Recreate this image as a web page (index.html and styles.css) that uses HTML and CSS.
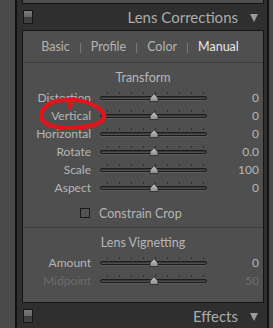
FILE: index.html
```html
<!DOCTYPE html>
<html lang="en">
<head>
  <meta charset="UTF-8">
  <meta name="viewport" content="width=device-width, initial-scale=1.0">
  <title>Lens Corrections</title>
  <link rel="stylesheet" href="styles.css">
</head>
<body>
  <svg width="0" height="0" class="defs">
    <defs>
      <linearGradient id="thumbFill" x1="0" y1="0" x2="0" y2="1">
        <stop offset="0" stop-color="#c8c8c8"/>
        <stop offset="1" stop-color="#8a8a8a"/>
      </linearGradient>
      <symbol id="thumb" viewBox="0 0 10 9">
        <path d="M5 0.5 C6 2.5 9 4 9 6 L9 8.5 L1 8.5 L1 6 C1 4 4 2.5 5 0.5 Z" fill="url(#thumbFill)" stroke="#2a2a2a" stroke-width="0.8"/>
      </symbol>
    </defs>
  </svg>

  <div class="column">
    <div class="panel panel-prev"></div>

    <div class="panel-header">
      <span class="toggle"></span>
      <span class="panel-title">Lens Corrections</span>
      <span class="caret"></span>
    </div>

    <div class="panel">
      <div class="tabs">
        <span class="tab">Basic</span>
        <span class="tab-sep"></span>
        <span class="tab">Profile</span>
        <span class="tab-sep"></span>
        <span class="tab">Color</span>
        <span class="tab-sep"></span>
        <span class="tab active">Manual</span>
      </div>

      <div class="section section-transform">
        <div class="section-title">Transform</div>
        <div class="row">
          <span class="label">Distortion</span>
          <div class="slider"><div class="ticks"></div><div class="track"></div><svg class="thumb"><use href="#thumb"/></svg></div>
          <span class="value">0</span>
        </div>
        <div class="row">
          <span class="label">Vertical</span>
          <div class="slider"><div class="ticks"></div><div class="track"></div><svg class="thumb"><use href="#thumb"/></svg></div>
          <span class="value">0</span>
        </div>
        <div class="row">
          <span class="label">Horizontal</span>
          <div class="slider"><div class="ticks"></div><div class="track"></div><svg class="thumb"><use href="#thumb"/></svg></div>
          <span class="value">0</span>
        </div>
        <div class="row">
          <span class="label">Rotate</span>
          <div class="slider"><div class="ticks"></div><div class="track"></div><svg class="thumb"><use href="#thumb"/></svg></div>
          <span class="value">0.0</span>
        </div>
        <div class="row">
          <span class="label">Scale</span>
          <div class="slider"><div class="ticks"></div><div class="track"></div><svg class="thumb"><use href="#thumb"/></svg></div>
          <span class="value">100</span>
        </div>
        <div class="row">
          <span class="label">Aspect</span>
          <div class="slider"><div class="ticks"></div><div class="track"></div><svg class="thumb"><use href="#thumb"/></svg></div>
          <span class="value">0</span>
        </div>
        <div class="check-row">
          <span class="checkbox"></span>
          <span>Constrain Crop</span>
        </div>
      </div>

      <div class="section section-vignette">
        <div class="section-title">Lens Vignetting</div>
        <div class="row">
          <span class="label">Amount</span>
          <div class="slider"><div class="ticks"></div><div class="track"></div><svg class="thumb"><use href="#thumb"/></svg></div>
          <span class="value">0</span>
        </div>
        <div class="row dim">
          <span class="label">Midpoint</span>
          <div class="slider"><div class="ticks"></div><div class="track"></div><svg class="thumb"><use href="#thumb"/></svg></div>
          <span class="value">50</span>
        </div>
      </div>
    </div>

    <div class="panel-header">
      <span class="toggle"></span>
      <span class="panel-title">Effects</span>
      <span class="caret"></span>
    </div>
  </div>

  <!-- red circle drawn over the Vertical label -->
  <svg class="annotation" viewBox="36 95 72 36">
    <path d="M64 100 C78 98 100 104 104 115 C106 124 86 128 68 128 C52 128 40 123 41 115 C42 106 54 100 64 100 C69 100 72 103 70 107" fill="none" stroke="#e3131b" stroke-width="4.2" stroke-linecap="round"/>
  </svg>
</body>
</html>
```

FILE: styles.css
```css
body {
  margin: 0;
  height: 328px;
  overflow: hidden;
  position: relative;
  background: #4a4a4a;
  font-family: Lato, "Open Sans", sans-serif;
  color: #b6b6b6;
}

.defs {
  position: absolute;
}

.column {
  box-sizing: border-box;
  margin-left: 15px;
  width: 254px;
  height: 328px;
  padding: 0 3px 0 5px;
  background: #2f2f2f;
  border-left: 2px solid #111;
  border-right: 2px solid #111;
}

.panel {
  background: #4f4f4f;
  border: 1px solid #141414;
}

.panel-prev {
  height: 3px;
  border-top: 0;
}

.panel-header {
  height: 26px;
  display: flex;
  align-items: center;
}

.toggle {
  box-sizing: border-box;
  width: 10px;
  height: 14px;
  margin-left: 1px;
  border: 1px solid #161616;
  background: linear-gradient(#7a7a7a 0, #666 50%, #3c3c3c 50%, #424242 100%);
}

.panel-title {
  margin-left: auto;
  font-size: 15px;
  color: #ababab;
}

.caret {
  width: 0;
  height: 0;
  margin: 1px 6px 0 12px;
  border-left: 4px solid transparent;
  border-right: 4px solid transparent;
  border-top: 8px solid #9c9c9c;
}

.tabs {
  height: 31px;
  display: flex;
  align-items: center;
  justify-content: center;
  gap: 10px;
  padding-right: 6px;
  border-bottom: 1px solid #3a3a3a;
  font-size: 12.5px;
}

.tab {
  color: #b4b4b4;
}

.tab.active {
  color: #e8e8e8;
}

.tab-sep {
  width: 1px;
  height: 10px;
  margin-top: 2px;
  background: #7a7a7a;
}

.section-transform {
  border-bottom: 1px solid #3a3a3a;
}

.section-vignette {
  padding-bottom: 13px;
}

.section-title {
  height: 25px;
  box-sizing: border-box;
  padding-top: 8px;
  line-height: 14px;
  text-align: center;
  font-size: 12.5px;
  color: #b6b6b6;
}

.row {
  height: 18px;
  display: grid;
  grid-template-columns: 68px 107px 43px;
  column-gap: 9px;
  align-items: center;
  font-size: 12px;
}

.label {
  text-align: right;
}

.value {
  text-align: right;
}

.row.dim .label,
.row.dim .value {
  color: #6c6c6c;
}

.slider {
  position: relative;
  height: 18px;
  display: flex;
  flex-direction: column;
  padding-top: 4px;
  box-sizing: border-box;
}

.ticks {
  height: 2px;
  width: 97px;
  margin: 0 0 2px 7px;
  background: repeating-linear-gradient(to right, #2c2c2c 0 1px, transparent 1px 12px);
}

.track {
  box-sizing: border-box;
  height: 4px;
  border: 1px solid #1c1c1c;
  border-radius: 3px;
  background: linear-gradient(#2e2e2e, #5a5a5a);
  box-shadow: 0 1px 0 rgba(255, 255, 255, 0.08);
}

.thumb {
  position: absolute;
  left: 49px;
  top: 5px;
  width: 10px;
  height: 9px;
}

.check-row {
  height: 18px;
  margin: 8px 0 5px;
  padding-left: 57px;
  display: flex;
  align-items: center;
  gap: 9px;
  font-size: 12.5px;
}

.checkbox {
  box-sizing: border-box;
  width: 10px;
  height: 10px;
  border: 1px solid #1a1a1a;
  background: #535353;
}

.annotation {
  position: absolute;
  left: 36px;
  top: 95px;
  width: 72px;
  height: 36px;
}
```
